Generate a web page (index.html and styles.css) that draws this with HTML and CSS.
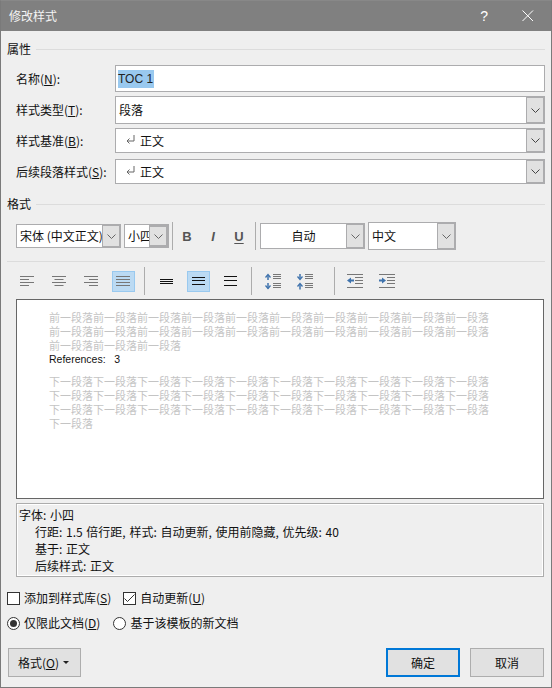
FILE: index.html
```html
<!DOCTYPE html>
<html lang="zh">
<head>
<meta charset="utf-8">
<title>修改样式</title>
<link rel="stylesheet" href="styles.css">
</head>
<body>
<div class="dialog">
  <header class="titlebar">
    <span class="title">修改样式</span>
    <span class="help">?</span>
    <svg class="close" width="12" height="12" viewBox="0 0 12 12"><path d="M.5.5l10.500 10.500M11 .5L.5 11" stroke="#fff" stroke-width="1" fill="none"/></svg>
  </header>
  <main class="content">
    <div class="group-head"><span>属性</span><i></i></div>
    <div class="fields">
      <div class="field f1"><label>名称(<u>N</u>):</label><div class="input"><span class="sel">TOC 1</span></div></div>
      <div class="field f2"><label>样式类型(<u>T</u>):</label><div class="input combo"><span class="val">段落</span><b class="arrow"><svg width="9" height="5" viewBox="0 0 9 5"><path d="M.5.5l4 4 4-4" stroke="#444" fill="none"/></svg></b></div></div>
      <div class="field f3"><label>样式基准(<u>B</u>):</label><div class="input combo"><span class="val"><svg class="ret" width="9" height="9" viewBox="0 0 9 9"><path d="M8 0v6H1M3.500 3.500L1 6l2.500 2.500" stroke="#666" fill="none"/></svg>正文</span><b class="arrow"><svg width="9" height="5" viewBox="0 0 9 5"><path d="M.5.5l4 4 4-4" stroke="#444" fill="none"/></svg></b></div></div>
      <div class="field f4"><label>后续段落样式(<u>S</u>):</label><div class="input combo"><span class="val"><svg class="ret" width="9" height="9" viewBox="0 0 9 9"><path d="M8 0v6H1M3.500 3.500L1 6l2.500 2.500" stroke="#666" fill="none"/></svg>正文</span><b class="arrow"><svg width="9" height="5" viewBox="0 0 9 5"><path d="M.5.5l4 4 4-4" stroke="#444" fill="none"/></svg></b></div></div>
    </div>
    <div class="group-head g2"><span>格式</span><i></i></div>
    <div class="toolbar t1">
      <div class="input combo c-font"><span class="val">宋体 (中文正文)</span><b class="arrow"><svg width="9" height="5" viewBox="0 0 9 5"><path d="M.5.5l4 4 4-4" stroke="#666" fill="none"/></svg></b></div>
      <div class="input combo c-size"><span class="val">小四</span><b class="arrow"><svg width="9" height="5" viewBox="0 0 9 5"><path d="M.5.5l4 4 4-4" stroke="#666" fill="none"/></svg></b></div>
      <s class="vsep s1"></s>
      <span class="fmt bold">B</span><span class="fmt ital">I</span><span class="fmt und">U</span>
      <s class="vsep s2"></s>
      <div class="input combo c-color"><span class="val">自动</span><b class="arrow"><svg width="9" height="5" viewBox="0 0 9 5"><path d="M.5.5l4 4 4-4" stroke="#666" fill="none"/></svg></b></div>
      <div class="input combo c-lang"><span class="val">中文</span><b class="arrow"><svg width="9" height="5" viewBox="0 0 9 5"><path d="M.5.5l4 4 4-4" stroke="#666" fill="none"/></svg></b></div>
    </div>
    <hr class="rule">
    <div class="toolbar t2">
      <span class="tool"><svg width="15" height="11" viewBox="0 0 15 11"><path d="M0 .5h14M0 3.500h9M0 6.500h14M0 9.500h9" stroke="#777"/></svg></span>
      <span class="tool"><svg width="15" height="11" viewBox="0 0 15 11"><path d="M0 .5h14M2.500 3.500h9M0 6.500h14M2.500 9.500h9" stroke="#777"/></svg></span>
      <span class="tool"><svg width="15" height="11" viewBox="0 0 15 11"><path d="M0 .5h14M5 3.500h9M0 6.500h14M5 9.500h9" stroke="#777"/></svg></span>
      <span class="tool on"><svg width="15" height="11" viewBox="0 0 15 11"><path d="M0 .5h14M0 3.500h14M0 6.500h14M0 9.500h14" stroke="#777"/></svg></span>
      <s class="vsep"></s>
      <span class="tool after-sep"><svg width="13" height="5" viewBox="0 0 13 5"><path d="M0 .5h13M0 2.500h13M0 4.500h13" stroke="#111"/></svg></span>
      <span class="tool on"><svg width="13" height="8" viewBox="0 0 13 8"><path d="M0 .5h13M0 3.500h13M0 7.500h13" stroke="#111"/></svg></span>
      <span class="tool"><svg width="13" height="10" viewBox="0 0 13 10"><path d="M0 .5h13M0 4.500h13M0 9.500h13" stroke="#111"/></svg></span>
      <s class="vsep"></s>
      <span class="tool"><svg width="16" height="17" viewBox="0 0 16 17"><path d="M3 2v5M3 10v5.500" stroke="#3f73ad" stroke-width="1.500" fill="none"/><path d="M.5 4.500L3 1.500l2.500 3M.5 12.500L3 15.500l2.500-3" stroke="#3f73ad" stroke-width="1.300" fill="none"/><path d="M8 1.500h8M8 3.500h8M8 5.500h8M8 10.500h8M8 12.500h8M8 14.500h8" stroke="#777"/></svg></span>
      <span class="tool"><svg width="16" height="17" viewBox="0 0 16 17"><path d="M3 1v5M3 11v5.500" stroke="#3f73ad" stroke-width="1.500" fill="none"/><path d="M.5 3.500L3 6.500l2.500-3M.5 13.500L3 10.500l2.500 3" stroke="#3f73ad" stroke-width="1.300" fill="none"/><path d="M8 1.500h8M8 3.500h8M8 5.500h8M8 10.500h8M8 12.500h8M8 14.500h8" stroke="#777"/></svg></span>
      <s class="vsep s5"></s>
      <span class="tool"><svg width="17" height="14" viewBox="0 0 17 14"><path d="M0 .5h16M8 3.500h8M8 6.500h8M8 9.500h8M0 13.500h16" stroke="#777"/><path d="M0 6.500L4 3.500v2h3v2H4v2z" fill="#3f73ad"/></svg></span>
      <span class="tool"><svg width="17" height="14" viewBox="0 0 17 14"><path d="M0 .5h16M8 3.500h8M8 6.500h8M8 9.500h8M0 13.500h16" stroke="#777"/><path d="M7 6.500L3 3.500v2H0v2h3v2z" fill="#3f73ad"/></svg></span>
    </div>
    <div class="preview">
      <p class="ghost">前一段落前一段落前一段落前一段落前一段落前一段落前一段落前一段落前一段落前一段落<br>前一段落前一段落前一段落前一段落前一段落前一段落前一段落前一段落前一段落前一段落<br>前一段落前一段落前一段落</p>
      <p class="ref">References:&nbsp;&nbsp;&nbsp;3</p>
      <p class="ghost next">下一段落下一段落下一段落下一段落下一段落下一段落下一段落下一段落下一段落下一段落<br>下一段落下一段落下一段落下一段落下一段落下一段落下一段落下一段落下一段落下一段落<br>下一段落下一段落下一段落下一段落下一段落下一段落下一段落下一段落下一段落下一段落<br>下一段落</p>
    </div>
    <div class="desc">
      <div>字体: 小四</div>
      <div class="ind">行距: 1.5 倍行距, 样式: 自动更新, 使用前隐藏, 优先级: 40</div>
      <div class="ind">基于: 正文</div>
      <div class="ind">后续样式: 正文</div>
    </div>
    <div class="opts o1">
      <span class="check"><i class="box"></i>添加到样式库(<u>S</u>)</span>
      <span class="check"><i class="box"><svg width="11" height="9" viewBox="0 0 11 9"><path d="M.5 4.500l3 3 7-7" stroke="#333" fill="none"/></svg></i>自动更新(<u>U</u>)</span>
    </div>
    <div class="opts o2">
      <span class="check"><i class="radio on"></i>仅限此文档(<u>D</u>)</span>
      <span class="check"><i class="radio"></i>基于该模板的新文档</span>
    </div>
    <footer class="buttons">
      <span class="btn fmtbtn">格式(<u>O</u>)<em class="caret"></em></span>
      <span class="btn ok">确定</span>
      <span class="btn cancel">取消</span>
    </footer>
  </main>
</div>
</body>
</html>
```

FILE: styles.css
```css
* { box-sizing: border-box; }
html, body { margin: 0; padding: 0; }
body { width: 552px; height: 688px; overflow: hidden; background: #efefef; font: 12px/16px "Noto Sans CJK SC", "Noto Sans", sans-serif; color: #111; }
.dialog { width: 552px; height: 688px; border: 1px solid #7a7a7a; border-top-color: #888; background: #efefef; display: flex; flex-direction: column; }
u { text-underline-offset: 1px; }
.titlebar { height: 30px; flex: none; background: #808080; display: flex; align-items: center; color: #fff; padding: 0 17px 0 8px; }
.title { font-size: 12px; flex: 1; color: #f4f4f4; }
.help { font: 14px "Liberation Sans", sans-serif; margin-right: 34px; }
.content { flex: 1; padding: 0 6px; display: flex; flex-direction: column; }
.group-head { display: flex; align-items: center; gap: 5px; height: 16px; margin-top: 10px; }
.group-head i { flex: 1; height: 1px; background: #dcdcdc; }
.g2 { margin-top: 12px; }
.fields { margin-top: 8px; padding-left: 9px; }
.field { display: flex; align-items: center; }
.field label { width: 99px; flex: none; }
.input { flex: 1; background: #fff; border: 1px solid #acacae; display: flex; align-items: center; height: 100%; padding-left: 3px; }
.f1 { height: 27px; }
.f2 { height: 28px; margin-top: 4px; }
.f3 { height: 25px; margin-top: 4px; }
.f4 { height: 25px; margin-top: 6px; }
.sel { background: #99c9ef; padding-right: 1px; margin-left: -1px; font: 12px/18px "Liberation Sans", sans-serif; color: #222; }
.combo { position: relative; padding-right: 18px; }
.combo .val { flex: 1; white-space: nowrap; }
.f3 .val, .f4 .val { padding-left: 7px; display: flex; align-items: center; }
.ret { margin-right: 5px; margin-top: -2px; }
.arrow { flex: none; width: 19px; position: absolute; right: -1px; top: -1px; bottom: -1px; background: #e1e1e1; border: 2px solid #acacae; border-left-width: 1px; display: flex; align-items: center; justify-content: center; }
.toolbar { display: flex; align-items: center; }
.t1 { height: 28px; margin-top: 10px; padding-left: 9px; }
.c-font { flex: none; width: 105px; height: 24px; }
.c-size { flex: none; width: 45px; height: 24px; margin-left: 3px; overflow: hidden; }
.c-size .arrow { right: 0; top: 0; bottom: 0; }
.vsep { flex: none; width: 1px; height: 28px; background: #acacac; display: block; }
.s1 { margin-left: 3px; }
.fmt { width: 26px; text-align: center; font: bold 13px "Liberation Sans", sans-serif; color: #555; }
.bold { margin-left: 1px; }
.ital { font-style: italic; }
.und { text-decoration: underline; text-underline-offset: 2px; }
.s2 { margin-left: 3px; }
.c-color { flex: none; width: 105px; height: 26px; margin-left: 4px; }
.c-color .val { text-align: center; padding-right: 3px; }
.c-lang { flex: none; width: 88px; height: 28px; margin-left: 3px; }
.rule { height: 1px; border: 0; background: #dcdcdc; margin: 11px 0 0; flex: none; }
.t2 { height: 28px; margin-top: 5px; padding-left: 9px; gap: 9px; }
.tool { width: 23px; height: 21px; display: flex; align-items: center; justify-content: center; border: 1px solid transparent; flex: none; }
.after-sep { margin-left: 1px; }
.tool.on { background: #bbdaf3; border-color: #99c9ef; }
.s5 { margin-left: 9px; }
.preview { height: 200px; margin: 4px 0 0 9px; width: 528px; background: #fff; border: 1px solid #666; padding: 10px 32px; font-size: 11px; line-height: 14px; overflow: hidden; flex: none; }
.preview p { margin: 0; white-space: nowrap; }
.ghost { color: #c4c4c4; }
.ref { color: #111; font: 10.500px/14px "Liberation Sans", sans-serif; }
.next { margin-top: 8px !important; }
.desc { height: 74px; width: 528px; margin: 4px 0 0 9px; flex: none; border: 1px solid #acacac; box-shadow: inset 0 0 0 1px #fff; padding: 2px; line-height: 17px; background: #efefef; word-spacing: 1px; }
.ind { padding-left: 16px; }
.opts { display: flex; height: 20px; }
.o1 { margin-top: 11px; gap: 12px; }
.o2 { margin-top: 5px; gap: 13px; }
.check { display: flex; align-items: center; color: #111; white-space: nowrap; }
.box { width: 13px; height: 13px; border: 1px solid #333; background: #fff; margin-right: 4px; display: flex; align-items: center; justify-content: center; }
.radio { width: 13px; height: 13px; border-radius: 50%; border: 1px solid #333; background: #fff; margin-right: 4px; position: relative; }
.radio.on::after { content: ""; position: absolute; left: 2px; top: 2px; width: 7px; height: 7px; border-radius: 50%; background: #333; }
.buttons { display: flex; margin-top: 15px; padding: 0 1px; }
.btn { height: 29px; display: flex; align-items: center; justify-content: center; background: #e1e1e1; border: 1px solid #adadad; }
.fmtbtn { width: 73px; padding-right: 2px; }
.caret { width: 0; height: 0; border: 3.500px solid transparent; border-top-color: #222; border-bottom: 0; margin-left: 4px; }
.ok { width: 74px; margin-left: auto; border: 2px solid #0078d7; }
.cancel { width: 74px; margin-left: 10px; }
```
